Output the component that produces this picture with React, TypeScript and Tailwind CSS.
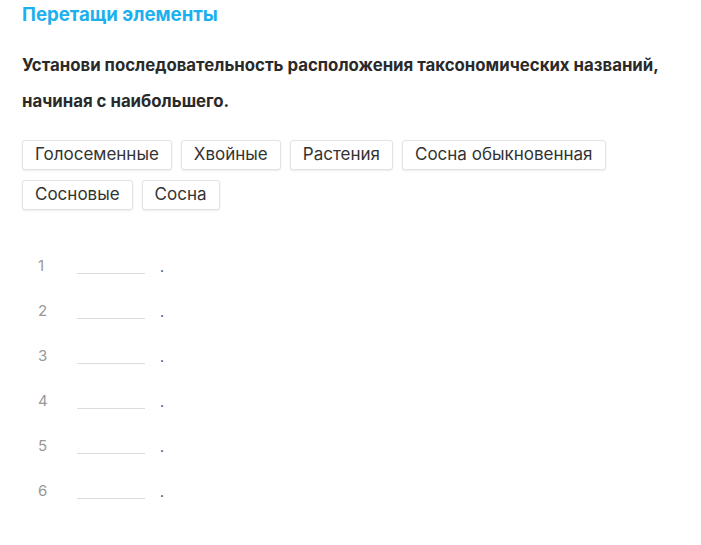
const words = ['Голосеменные', 'Хвойные', 'Растения', 'Сосна обыкновенная', 'Сосновые', 'Сосна'];

export default function App() {
  return (
    <div className="min-h-[545px] bg-white px-[22px] pt-[3px] text-[#2b2b2b]" style={{ fontFamily: 'Inter, "Noto Sans", sans-serif' }}>
      <h2 className="text-[18.6px] font-bold leading-[22px] text-[#1cb0ee]">Перетащи элементы</h2>
      <p className="mt-[22px] text-[16.8px] font-bold leading-[36px] text-[#2a2a2a]">
        Установи последовательность расположения таксономических названий, начиная с наибольшего.
      </p>
      <div className="mt-[21px] flex max-w-[620px] flex-wrap gap-x-[9px] gap-y-[10px]">
        {words.map((w) => (
          <div
            key={w}
            className="flex h-[30px] items-center rounded-[3px] border border-[#e3e3e3] bg-white px-[12px] text-[17px] text-[#333] shadow-[0_1px_2px_rgba(0,0,0,0.08)]"
          >
            {w}
          </div>
        ))}
      </div>
      <div className="mt-[45px] flex flex-col gap-[23px] pl-[16px]">
        {[1, 2, 3, 4, 5, 6].map((n) => (
          <div key={n} className="flex h-[22px] items-center">
            <span className="w-[39px] text-[15px] text-[#999]">{n}</span>
            <span className="mt-[14px] h-[1px] w-[68px] bg-[#dcdcdc]" />
            <span className="ml-[15px] mt-[1px] text-[14px] text-[#333]">.</span>
          </div>
        ))}
      </div>
    </div>
  );
}
